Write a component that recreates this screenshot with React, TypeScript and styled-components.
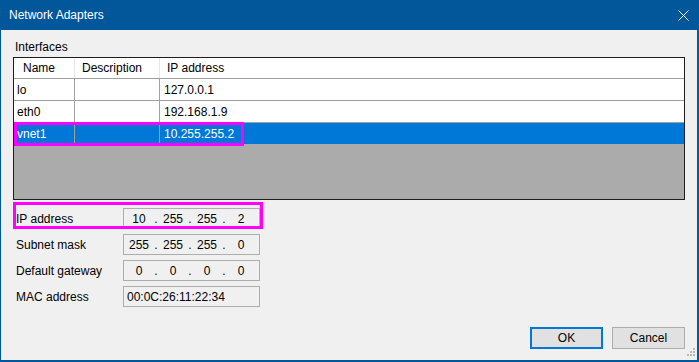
import { Fragment } from 'react'
import styled, { createGlobalStyle } from 'styled-components'

const GlobalStyle = createGlobalStyle`
  html, body {
    margin: 0;
    padding: 0;
    background: #f0f0f0;
  }
  body {
    font-family: "Liberation Sans", Arial, sans-serif;
    font-size: 12px;
    color: #000;
  }
`

const Window = styled.div`
  width: 699px;
  height: 362px;
  box-sizing: border-box;
  display: flex;
  flex-direction: column;
  border-left: 1px solid #02569a;
  border-right: 2px solid #02569a;
  border-bottom: 2px solid #02569a;
  background: #f0f0f0;
  position: relative;
`

const TitleBar = styled.div`
  height: 30px;
  flex: 0 0 30px;
  background: #02569a;
  color: #fff;
  display: flex;
  align-items: center;
  justify-content: space-between;
  padding: 0 10px 0 9px;
  margin-left: -1px;
  margin-right: -2px;
  font-size: 12px;
`

const CloseButton = styled.svg`
  width: 11px;
  height: 11px;
  display: block;
`

const Body = styled.div`
  flex: 1;
  display: flex;
  flex-direction: column;
  padding: 10px 12px 11px 12px;
`

const GroupLabel = styled.div`
  line-height: 14px;
  padding-left: 2px;
  margin-bottom: 3px;
`

const ListView = styled.div`
  height: 143px;
  box-sizing: border-box;
  border: 1px solid #1e1e1e;
  background: #ababab;
  display: flex;
  flex-direction: column;
  overflow: hidden;
`

const Row = styled.div<{ $header?: boolean; $selected?: boolean }>`
  display: grid;
  grid-template-columns: 61px 85px 1fr;
  height: ${({ $header }) => ($header ? '20px' : '22px')};
  box-sizing: border-box;
  border-top: ${({ $header }) => ($header ? 'none' : '1px solid #a0a0a0')};
  background: ${({ $selected }) => ($selected ? '#0078d7' : '#fff')};
  color: ${({ $selected }) => ($selected ? '#fff' : '#000')};
  position: relative;
`

const Cell = styled.div<{ $header?: boolean; $last?: boolean; $pad: number }>`
  display: flex;
  align-items: center;
  padding-left: ${({ $pad }) => $pad}px;
  border-right: ${({ $last, $header }) =>
    $last ? 'none' : $header ? '1px solid #e5e5e5' : '1px solid #a0a0a0'};
  white-space: nowrap;
  overflow: hidden;
`

const Highlight = styled.div<{ $l: number; $t: number; $w: number; $h: number }>`
  position: absolute;
  left: ${({ $l }) => $l}px;
  top: ${({ $t }) => $t}px;
  width: ${({ $w }) => $w}px;
  height: ${({ $h }) => $h}px;
  box-sizing: border-box;
  border: 3px solid #ff00ff;
  pointer-events: none;
`

const Form = styled.div`
  margin-top: 8px;
  padding-left: 3px;
  display: flex;
  flex-direction: column;
  gap: 5px;
`

const FormRow = styled.div`
  display: flex;
  align-items: center;
  height: 21px;
  position: relative;
`

const FieldLabel = styled.div`
  width: 107px;
`

const Field = styled.div<{ $mono?: boolean }>`
  width: 137px;
  height: 21px;
  box-sizing: border-box;
  border: 1px solid #adadad;
  background: #f0f0f0;
  display: flex;
  align-items: center;
  padding-left: ${({ $mono }) => ($mono ? '3px' : '0')};
  color: #000;
`

const Octet = styled.span`
  width: 30px;
  text-align: center;
`

const Dot = styled.span`
  width: 4px;
  text-align: center;
`

const Buttons = styled.div`
  margin-top: auto;
  display: flex;
  justify-content: flex-end;
  gap: 9px;
`

const Button = styled.button<{ $default?: boolean }>`
  width: 73px;
  height: 22px;
  box-sizing: border-box;
  background: #e1e1e1;
  border: ${({ $default }) => ($default ? '2px solid #0078d7' : '1px solid #adadad')};
  font-family: "Liberation Sans", Arial, sans-serif;
  font-size: 12px;
  color: #000;
  padding: 0;
`

const Grip = styled.svg`
  position: absolute;
  right: 1px;
  bottom: 2px;
  width: 10px;
  height: 10px;
`

const adapters = [
  { name: 'lo', desc: '', ip: '127.0.0.1' },
  { name: 'eth0', desc: '', ip: '192.168.1.9' },
  { name: 'vnet1', desc: '', ip: '10.255.255.2' },
]

const fields = [
  { label: 'IP address', octets: ['10', '255', '255', '2'], marked: true },
  { label: 'Subnet mask', octets: ['255', '255', '255', '0'] },
  { label: 'Default gateway', octets: ['0', '0', '0', '0'] },
]

const IpField = ({ octets }: { octets: string[] }) => (
  <Field>
    {octets.map((o, i) => (
      <Fragment key={i}>
        <Octet>{o}</Octet>
        {i < 3 && <Dot>.</Dot>}
      </Fragment>
    ))}
  </Field>
)

export default function App() {
  return (
    <>
      <GlobalStyle />
      <Window>
        <TitleBar>
          <span>Network Adapters</span>
          <CloseButton viewBox="0 0 11 11">
            <path d="M0.5 0.5 L10.5 10.5 M10.5 0.5 L0.5 10.5" stroke="#fff" strokeWidth="1" />
          </CloseButton>
        </TitleBar>
        <Body>
          <GroupLabel>Interfaces</GroupLabel>
          <ListView>
            <Row $header>
              <Cell $header $pad={9}>Name</Cell>
              <Cell $header $pad={7}>Description</Cell>
              <Cell $header $last $pad={7}>IP address</Cell>
            </Row>
            {adapters.map((a, i) => {
              const selected = i === adapters.length - 1
              return (
                <Row key={a.name} $selected={selected}>
                  <Cell $pad={3}>{a.name}</Cell>
                  <Cell $pad={3}>{a.desc}</Cell>
                  <Cell $last $pad={4}>{a.ip}</Cell>
                  {selected && <Highlight $l={0} $t={-1} $w={230} $h={24} />}
                </Row>
              )
            })}
          </ListView>
          <Form>
            {fields.map((f) => (
              <FormRow key={f.label}>
                <FieldLabel>{f.label}</FieldLabel>
                <IpField octets={f.octets} />
                {f.marked && <Highlight $l={-3} $t={-6} $w={250} $h={27} />}
              </FormRow>
            ))}
            <FormRow>
              <FieldLabel>MAC address</FieldLabel>
              <Field $mono>00:0C:26:11:22:34</Field>
            </FormRow>
          </Form>
          <Buttons>
            <Button $default>OK</Button>
            <Button>Cancel</Button>
          </Buttons>
        </Body>
        <Grip viewBox="0 0 10 10">
          {[
            [7, 0],
            [4, 3],
            [7, 3],
            [1, 6],
            [4, 6],
            [7, 6],
          ].map(([x, y]) => (
            <rect key={`${x}-${y}`} x={x} y={y} width="2" height="2" fill="#b8b8b8" />
          ))}
        </Grip>
      </Window>
    </>
  )
}
